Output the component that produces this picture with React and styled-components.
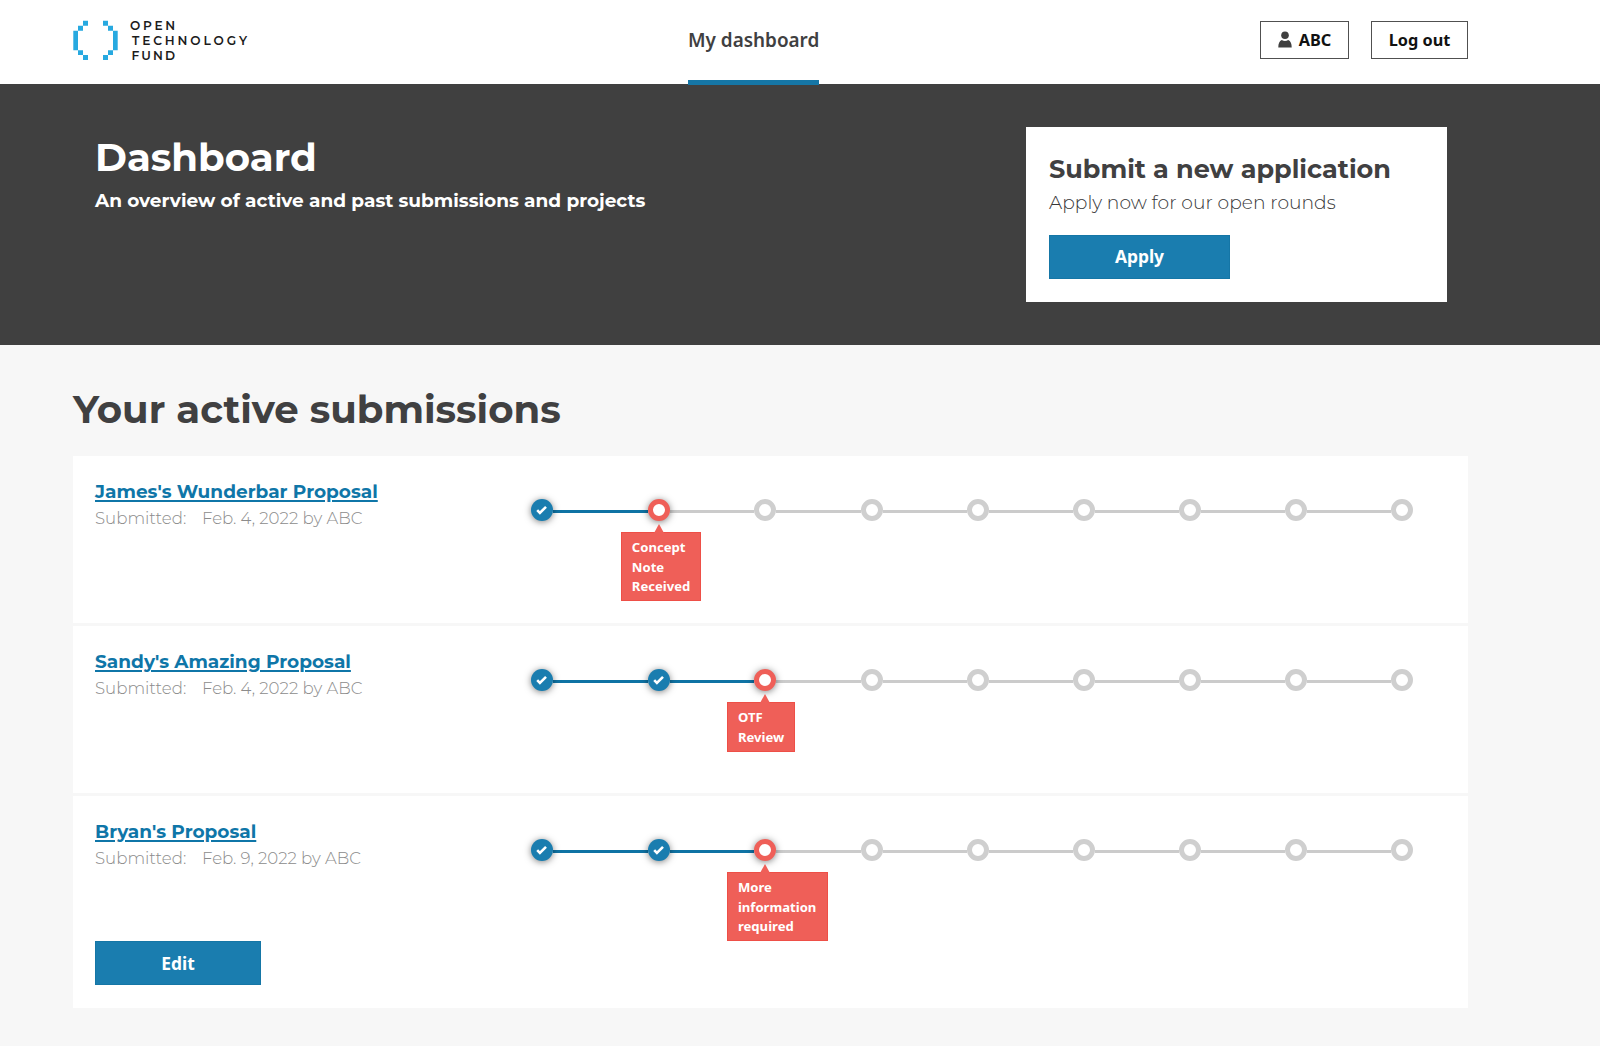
import React from 'react';
import styled, { createGlobalStyle, css } from 'styled-components';

const DISPLAY = "Montserrat, Inter, 'Noto Sans', sans-serif";
const BODY = "'Noto Sans', 'Open Sans', sans-serif";

const Global = createGlobalStyle`
  *, *::before, *::after { box-sizing: border-box; }
  body { margin: 0; background: #f7f7f7; font-family: ${BODY}; color: #404041; }
  h1, h2, h3, p { margin: 0; }
`;

const Page = styled.div`
  min-height: 1046px;
  background: #f7f7f7;
`;

const Header = styled.header`
  display: grid;
  grid-template-columns: 615px auto 1fr;
  align-items: start;
  height: 84px;
  padding: 0 132px 0 73px;
  background: #fff;
`;

const Brand = styled.div`
  display: flex;
  gap: 12px;
  padding-top: 19px;
`;

const BrandMark = styled.svg`
  width: 45px;
  height: 42px;
`;

const BrandName = styled.div`
  display: flex;
  flex-direction: column;
  margin-top: -1px;
  font: 600 12.2px/15px ${DISPLAY};
  color: #1c1c1c;
`;

const BrandLine = styled.span`
  letter-spacing: ${(p) => p.$spacing}px;
  padding-left: ${(p) => p.$indent || 0}px;
`;

const NavLink = styled.a`
  position: relative;
  height: 85px;
  padding-top: 26px;
  border-bottom: 5px solid #1576a6;
  font: 600 18.9px/28px ${BODY};
  white-space: nowrap;
`;

const Account = styled.div`
  display: flex;
  justify-content: flex-end;
  gap: 22px;
  padding-top: 21px;
`;

const OutlineButton = styled.button`
  display: flex;
  align-items: center;
  justify-content: center;
  gap: 7px;
  width: ${(p) => p.$width}px;
  height: 38px;
  padding: 0 0 1px;
  border: 1px solid #505050;
  background: #fff;
  color: #111;
  font: 700 16.3px/24px ${BODY};
`;

const Hero = styled.section`
  display: flex;
  justify-content: space-between;
  align-items: flex-start;
  height: 261px;
  padding: 43px 153px 0 95px;
  background: #404040;
  color: #fff;
`;

const HeroCopy = styled.div`
  padding-top: 7px;
`;

const type = css`
  font-family: ${DISPLAY};
  white-space: nowrap;
`;

const HeroTitle = styled.h1`
  ${type}
  font-size: 38.7px;
  font-weight: 700;
  line-height: 48px;
`;

const HeroSubtitle = styled.p`
  ${type}
  margin-top: 7px;
  font-size: 18.53px;
  font-weight: 700;
  line-height: 24px;
`;

const ApplyCard = styled.aside`
  width: 421px;
  height: 175px;
  padding: 25px 23px;
  background: #fff;
  color: #404041;
`;

const CardTitle = styled.h2`
  ${type}
  font-size: 25.5px;
  font-weight: 700;
  line-height: 34px;
`;

const CardText = styled.p`
  ${type}
  padding-top: 1px;
  color: #363637;
  font-size: 18.7px;
  font-weight: 300;
  line-height: 32px;
`;

const PrimaryButton = styled.button`
  display: block;
  width: ${(p) => p.$width}px;
  height: 44px;
  margin-top: ${(p) => p.$top}px;
  padding: 0 0 ${(p) => p.$lift}px;
  border: 1px solid #1576a6;
  background: #1a7daf;
  color: #fff;
  font: 700 17.4px/24px ${BODY};
`;

const Main = styled.main`
  width: 1395px;
  margin-left: 73px;
  padding-top: 37px;
`;

const SectionTitle = styled.h2`
  ${type}
  height: 74px;
  font-size: 38.65px;
  font-weight: 700;
  line-height: 56px;
`;

const SubmissionList = styled.div`
  display: flex;
  flex-direction: column;
  gap: 3px;
`;

const SubmissionRow = styled.article`
  display: flex;
  align-items: flex-start;
  height: ${(p) => (p.$tall ? 212 : 167)}px;
  padding: 0 22px;
  background: #fff;
`;

const Summary = styled.div`
  width: 436px;
  padding-top: 23px;
`;

const SubmissionLink = styled.a`
  ${type}
  display: block;
  color: #0f76a8;
  font-size: 18.5px;
  font-weight: 700;
  line-height: 26px;
  text-decoration: underline;
  text-decoration-thickness: 2px;
  text-underline-offset: 2px;
`;

const Meta = styled.p`
  display: flex;
  color: #8c8c8c;
  font-weight: 300;
  font-size: 16.6px;
  line-height: 26px;
`;

const MetaLabel = styled.span`
  ${type}
  width: 107px;
`;

const MetaValue = styled.span`
  ${type}
`;

const Steps = styled.ol`
  display: flex;
  align-items: center;
  margin: 43px 0 0;
  padding: 0;
  list-style: none;
`;

const Step = styled.li`
  position: relative;
  display: grid;
  place-items: center;
  width: 22px;
  height: 22px;
  border-radius: 50%;
  border: ${(p) => (p.$state === 'done' ? 0 : 5)}px solid ${(p) => (p.$state === 'current' ? '#ef5f58' : '#cfcfcf')};
  background: ${(p) => (p.$state === 'done' ? '#1a7daf' : '#fff')};
  box-shadow: ${(p) => (p.$state === 'todo' ? 'none' : '0 1px 7px rgba(0, 0, 0, 0.5)')};
`;

const Connector = styled.li`
  width: ${(p) => (p.$first ? 95.3 : 84.15)}px;
  height: 3px;
  margin-top: 3px;
  background: ${(p) => (p.$done ? '#0f73a4' : '#cbcbcb')};
`;

const StageLabel = styled.div`
  position: absolute;
  top: 28px;
  left: -32px;
  width: ${(p) => p.$width}px;
  padding: 5px 0 3.5px 9.5px;
  background: #ef5f58;
  border: 1px solid #ee4f47;
  color: #fff;
  font: 700 13.1px/19.5px ${BODY};

  &::before {
    content: '';
    position: absolute;
    left: 31.5px;
    top: -9px;
    border: solid transparent;
    border-width: 0 5.5px 9px;
    border-bottom-color: #ef5f58;
  }
`;

function Logo() {
  return (
    <Brand>
      <BrandMark viewBox="0 0 45 42" fill="#27a9e0">
        <path d="M10 1.8h5v5h-5zM5 6.8h5v5H5zM.3 11.8h4.7v19.4H.3zM5 31.2h5v4.8H5zM10 36h5v5h-5z" />
        <path d="M30 1.8h5v5h-5zM35 6.8h5v5h-5zM40 11.8h4.7v19.4H40zM35 31.2h5v4.8h-5zM30 36h5v5h-5z" />
      </BrandMark>
      <BrandName>
        <BrandLine $spacing={2.7}>OPEN</BrandLine>
        <BrandLine $spacing={2.87} $indent={2}>TECHNOLOGY</BrandLine>
        <BrandLine $spacing={2.1} $indent={1.5}>FUND</BrandLine>
      </BrandName>
    </Brand>
  );
}

function PersonIcon() {
  return (
    <svg width="14" height="17" viewBox="0 0 14 17" fill="#404040">
      <circle cx="7" cy="4.2" r="3.8" />
      <path d="M.3 16.5c0-4 1-6.6 3.5-7.6 1.8 1.5 4.6 1.5 6.4 0 2.5 1 3.5 3.6 3.5 7.6z" />
    </svg>
  );
}

function Check() {
  return (
    <svg width="12" height="10" viewBox="0 0 12 10" fill="none" stroke="#fff" strokeWidth="2.6">
      <path d="M1.2 5.2 3.9 7.9 10 1.8" />
    </svg>
  );
}

const submissions = [
  { title: "James's Wunderbar Proposal", date: 'Feb. 4, 2022 by ABC', current: 1, label: ['Concept', 'Note', 'Received'], labelWidth: 80 },
  { title: "Sandy's Amazing Proposal", date: 'Feb. 4, 2022 by ABC', current: 2, label: ['OTF', 'Review'], labelWidth: 68 },
  { title: "Bryan's Proposal", date: 'Feb. 9, 2022 by ABC', current: 2, label: ['More', 'information', 'required'], labelWidth: 101, editable: true },
];

function Progress({ current, label, labelWidth }) {
  return (
    <Steps>
      {Array.from({ length: 9 }, (_, i) => (
        <React.Fragment key={i}>
          {i > 0 && <Connector $first={i === 1} $done={i <= current} />}
          <Step $state={i < current ? 'done' : i === current ? 'current' : 'todo'}>
            {i < current && <Check />}
            {i === current && (
              <StageLabel $width={labelWidth}>
                {label.map((word) => <div key={word}>{word}</div>)}
              </StageLabel>
            )}
          </Step>
        </React.Fragment>
      ))}
    </Steps>
  );
}

export default function App() {
  return (
    <Page>
      <Global />
      <Header>
        <Logo />
        <NavLink>My dashboard</NavLink>
        <Account>
          <OutlineButton $width={89}><PersonIcon />ABC</OutlineButton>
          <OutlineButton $width={97}>Log out</OutlineButton>
        </Account>
      </Header>
      <Hero>
        <HeroCopy>
          <HeroTitle>Dashboard</HeroTitle>
          <HeroSubtitle>An overview of active and past submissions and projects</HeroSubtitle>
        </HeroCopy>
        <ApplyCard>
          <CardTitle>Submit a new application</CardTitle>
          <CardText>Apply now for our open rounds</CardText>
          <PrimaryButton $width={181} $top={16} $lift={2}>Apply</PrimaryButton>
        </ApplyCard>
      </Hero>
      <Main>
        <SectionTitle>Your active submissions</SectionTitle>
        <SubmissionList>
          {submissions.map((s) => (
            <SubmissionRow key={s.title} $tall={s.editable}>
              <Summary>
                <SubmissionLink>{s.title}</SubmissionLink>
                <Meta>
                  <MetaLabel>Submitted:</MetaLabel>
                  <MetaValue>{s.date}</MetaValue>
                </Meta>
                {s.editable && <PrimaryButton $width={166} $top={70} $lift={0}>Edit</PrimaryButton>}
              </Summary>
              <Progress current={s.current} label={s.label} labelWidth={s.labelWidth} />
            </SubmissionRow>
          ))}
        </SubmissionList>
      </Main>
    </Page>
  );
}
